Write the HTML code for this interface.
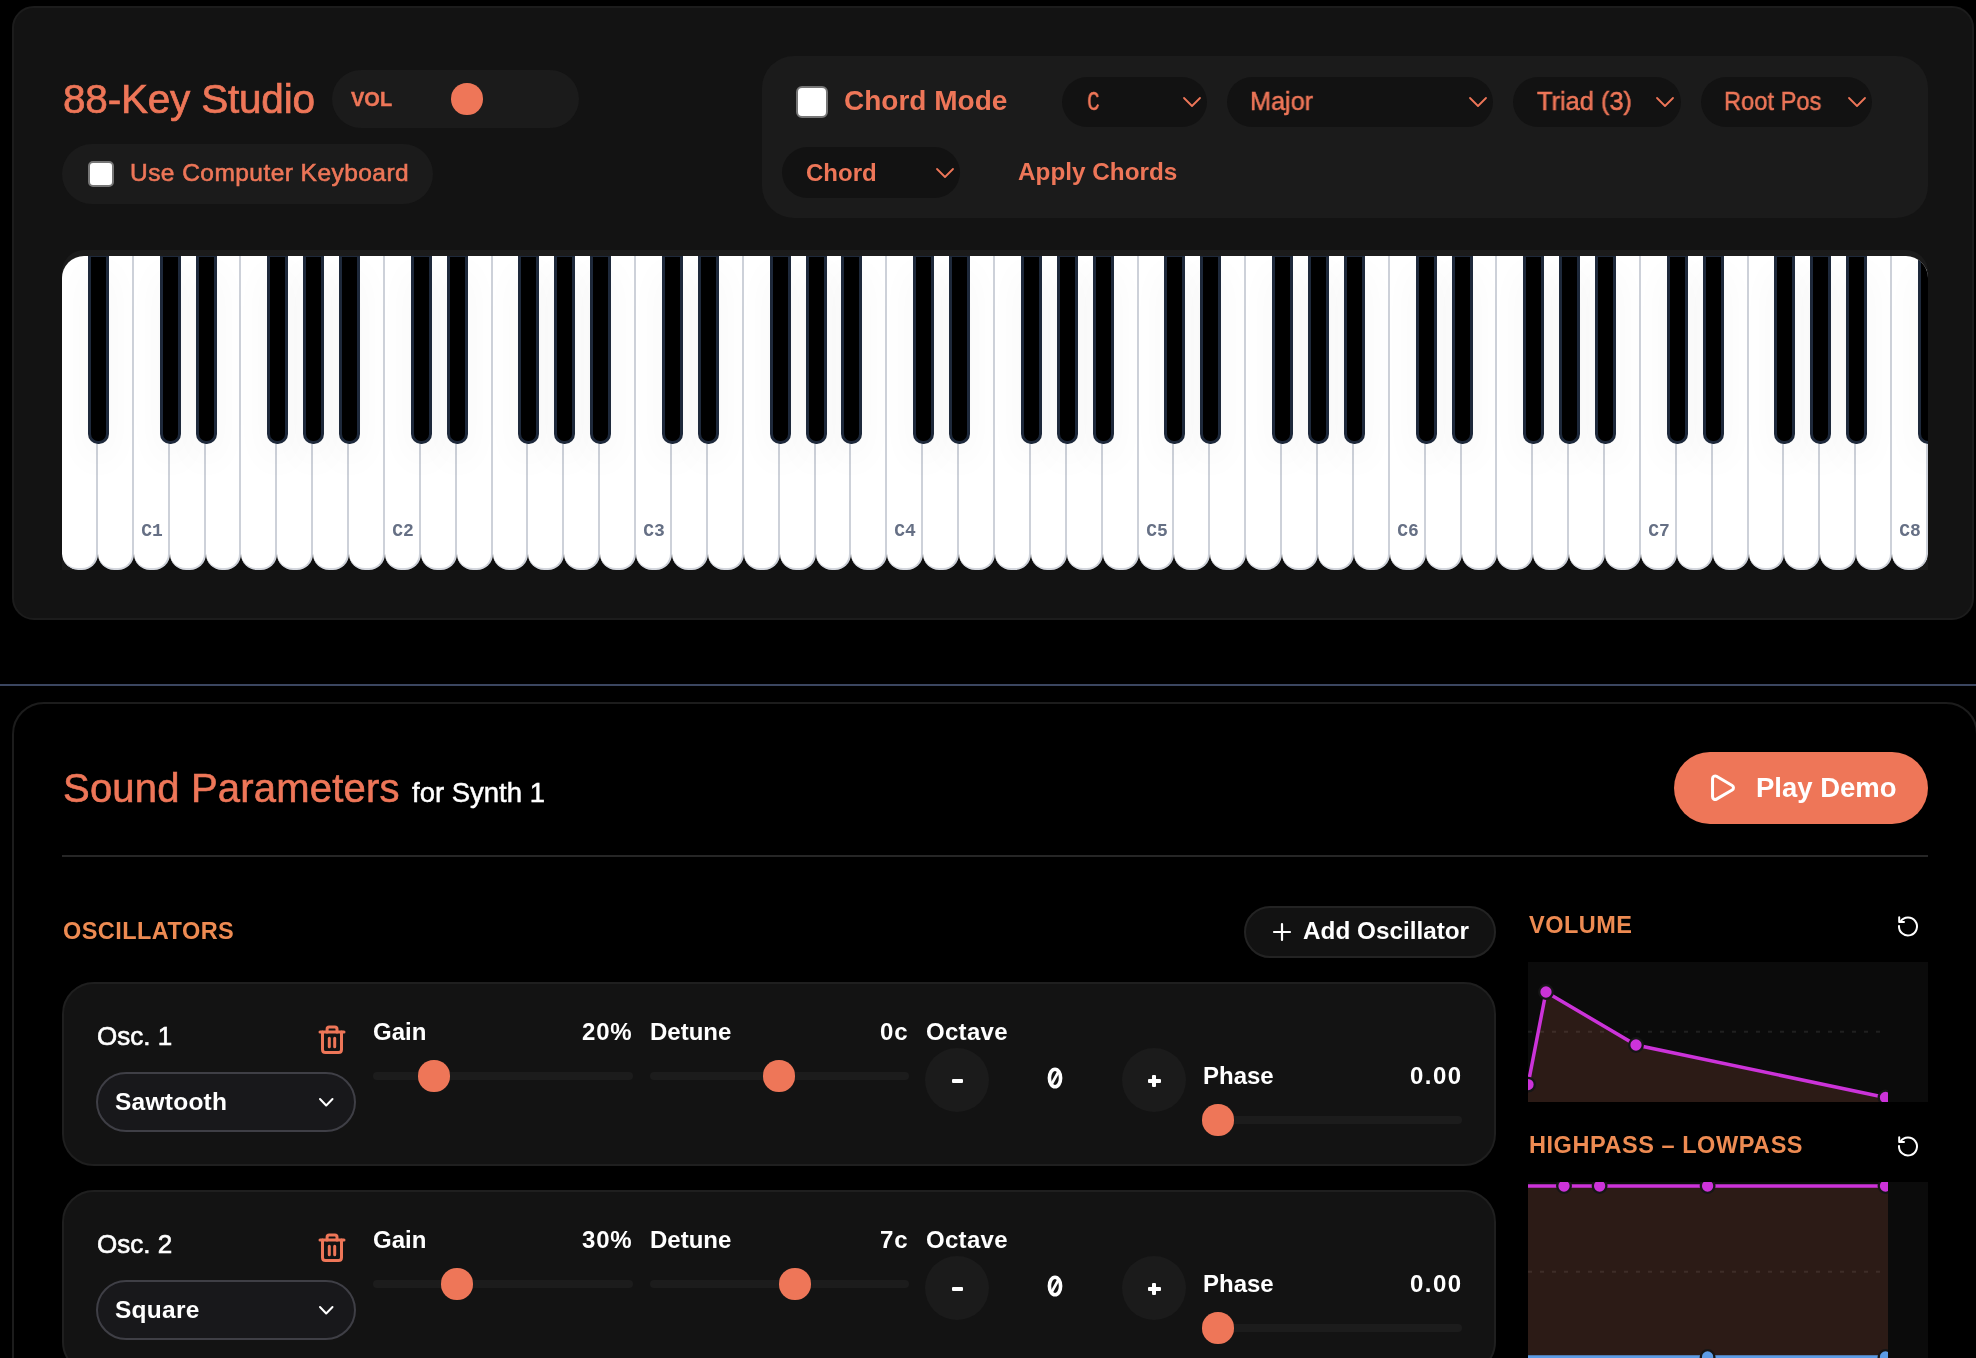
<!DOCTYPE html>
<html><head><meta charset="utf-8"><title>88-Key Studio</title><style>
html,body{margin:0;padding:0;background:#000;width:1976px;height:1358px;overflow:hidden;}
body{position:relative;font-family:"Liberation Sans", sans-serif;}
.t{position:absolute;white-space:nowrap;will-change:transform;}
.b{position:absolute;}
.wk{position:absolute;top:0;height:314px;box-sizing:border-box;background:#fff;border-right:2px solid #cdd1d9;border-bottom:2px solid #d4d7de;border-radius:0 0 16px 16px;}
.bk{position:absolute;top:-2px;width:21px;height:190px;box-sizing:border-box;background:#000;border:3px solid #1e293b;border-radius:0 0 10px 10px;box-shadow:0 18px 36px rgba(0,0,0,0.045);}
.lbl{position:absolute;top:264px;height:22px;text-align:center;font:700 18px/22px "Liberation Mono", monospace;color:#667085;will-change:transform;}
</style></head>
<body>
<div class="b" style="left:12.0px;top:6.0px;width:1962.0px;height:614.0px;background:#131313;border-radius:22px;border:2px solid #1c1c1c;box-sizing:border-box;"></div>
<div class="t" style="left:63.0px;top:78.7px;font-size:40.5px;line-height:40.5px;color:#ee7658;font-weight:400;font-family:'Liberation Sans', sans-serif;letter-spacing:-0.2px;-webkit-text-stroke:0.7px currentColor;">88-Key Studio</div>
<div class="b" style="left:332.0px;top:70.0px;width:247.0px;height:58.0px;background:#1b1b1b;border-radius:29px;"></div>
<div class="t" style="left:350.5px;top:89.1px;font-size:20px;line-height:20px;color:#ee7658;font-weight:700;font-family:'Liberation Sans', sans-serif;letter-spacing:0px;-webkit-text-stroke:0.4px currentColor;">VOL</div>
<div class="b" style="left:451.2px;top:83.2px;width:31.5px;height:31.5px;background:#ee7658;border-radius:15.75px;"></div>
<div class="b" style="left:62.0px;top:144.0px;width:371.0px;height:60.0px;background:#1b1b1b;border-radius:30px;"></div>
<div class="b" style="left:88.0px;top:161.0px;width:26.0px;height:26.0px;background:#ffffff;border-radius:5px;border:2px solid #767676;box-sizing:border-box;"></div>
<div class="t" style="left:130.0px;top:161.3px;font-size:24.5px;line-height:24.5px;color:#ee7658;font-weight:400;font-family:'Liberation Sans', sans-serif;letter-spacing:0.45px;-webkit-text-stroke:0.6px currentColor;">Use Computer Keyboard</div>
<div class="b" style="left:762.0px;top:56.0px;width:1166.0px;height:162.0px;background:#1b1b1b;border-radius:32px;"></div>
<div class="b" style="left:796.0px;top:86.0px;width:32.0px;height:32.0px;background:#ffffff;border-radius:6px;border:2px solid #767676;box-sizing:border-box;"></div>
<div class="t" style="left:844.0px;top:87.3px;font-size:28px;line-height:28px;color:#ee7658;font-weight:700;font-family:'Liberation Sans', sans-serif;letter-spacing:0px;">Chord Mode</div>
<div class="b" style="left:1062.0px;top:76.5px;width:145.0px;height:50.0px;background:#121212;border-radius:25px;"></div>
<div class="t" style="left:1087.0px;top:89.0px;font-size:28px;line-height:28px;color:#ee7658;font-weight:400;font-family:'Liberation Mono', monospace;letter-spacing:0px;display:inline-block;transform:scaleX(0.76);transform-origin:left;-webkit-text-stroke:0.4px currentColor;">C</div>
<svg class="b" style="left:1182.0px;top:95.5px" width="20.0" height="12.0"><polyline points="2,2 10.0,10.0 18.0,2" fill="none" stroke="#ee7658" stroke-width="1.8" stroke-linecap="round" stroke-linejoin="round"/></svg>
<div class="b" style="left:1227.0px;top:76.5px;width:266.0px;height:50.0px;background:#121212;border-radius:25px;"></div>
<div class="t" style="left:1250.0px;top:88.2px;font-size:26px;line-height:26px;color:#ee7658;font-weight:400;font-family:'Liberation Sans', sans-serif;letter-spacing:0px;-webkit-text-stroke:0.5px currentColor;transform:scaleX(0.97);transform-origin:left;">Major</div>
<svg class="b" style="left:1468.0px;top:95.5px" width="20.0" height="12.0"><polyline points="2,2 10.0,10.0 18.0,2" fill="none" stroke="#ee7658" stroke-width="1.8" stroke-linecap="round" stroke-linejoin="round"/></svg>
<div class="b" style="left:1513.0px;top:76.5px;width:168.0px;height:50.0px;background:#121212;border-radius:25px;"></div>
<div class="t" style="left:1537.0px;top:88.2px;font-size:26px;line-height:26px;color:#ee7658;font-weight:400;font-family:'Liberation Sans', sans-serif;letter-spacing:0px;-webkit-text-stroke:0.5px currentColor;transform:scaleX(0.976);transform-origin:left;">Triad (3)</div>
<svg class="b" style="left:1655.0px;top:95.5px" width="20.0" height="12.0"><polyline points="2,2 10.0,10.0 18.0,2" fill="none" stroke="#ee7658" stroke-width="1.8" stroke-linecap="round" stroke-linejoin="round"/></svg>
<div class="b" style="left:1701.0px;top:76.5px;width:171.0px;height:50.0px;background:#121212;border-radius:25px;"></div>
<div class="t" style="left:1724.0px;top:88.2px;font-size:26px;line-height:26px;color:#ee7658;font-weight:400;font-family:'Liberation Sans', sans-serif;letter-spacing:0px;-webkit-text-stroke:0.5px currentColor;transform:scaleX(0.91);transform-origin:left;">Root Pos</div>
<svg class="b" style="left:1847.0px;top:95.5px" width="20.0" height="12.0"><polyline points="2,2 10.0,10.0 18.0,2" fill="none" stroke="#ee7658" stroke-width="1.8" stroke-linecap="round" stroke-linejoin="round"/></svg>
<div class="b" style="left:782.0px;top:147.0px;width:178.0px;height:51.0px;background:#121212;border-radius:26px;"></div>
<div class="t" style="left:806.0px;top:160.7px;font-size:24px;line-height:24px;color:#ee7658;font-weight:700;font-family:'Liberation Sans', sans-serif;letter-spacing:0px;">Chord</div>
<svg class="b" style="left:935.0px;top:166.5px" width="20.0" height="12.0"><polyline points="2,2 10.0,10.0 18.0,2" fill="none" stroke="#ee7658" stroke-width="1.8" stroke-linecap="round" stroke-linejoin="round"/></svg>
<div class="t" style="left:1018.0px;top:160.4px;font-size:24.3px;line-height:24.3px;color:#ee7658;font-weight:700;font-family:'Liberation Sans', sans-serif;letter-spacing:0px;">Apply Chords</div>
<div class="b" style="left:62px;top:250px;width:1866px;height:320px;background:#1b1b1b;border-radius:22px 22px 0 0;"></div>
<div class="b" style="left:62px;top:256px;width:1866px;height:314px;overflow:hidden;border-radius:22px 22px 16px 16px;background:#0e0e0e;">
<div class="wk" style="left:0px;width:36px"></div>
<div class="wk" style="left:36px;width:36px"></div>
<div class="wk" style="left:72px;width:36px"></div>
<div class="wk" style="left:108px;width:36px"></div>
<div class="wk" style="left:144px;width:35px"></div>
<div class="wk" style="left:179px;width:36px"></div>
<div class="wk" style="left:215px;width:36px"></div>
<div class="wk" style="left:251px;width:36px"></div>
<div class="wk" style="left:287px;width:36px"></div>
<div class="wk" style="left:323px;width:36px"></div>
<div class="wk" style="left:359px;width:36px"></div>
<div class="wk" style="left:395px;width:36px"></div>
<div class="wk" style="left:431px;width:35px"></div>
<div class="wk" style="left:466px;width:36px"></div>
<div class="wk" style="left:502px;width:36px"></div>
<div class="wk" style="left:538px;width:36px"></div>
<div class="wk" style="left:574px;width:36px"></div>
<div class="wk" style="left:610px;width:36px"></div>
<div class="wk" style="left:646px;width:36px"></div>
<div class="wk" style="left:682px;width:36px"></div>
<div class="wk" style="left:718px;width:36px"></div>
<div class="wk" style="left:754px;width:35px"></div>
<div class="wk" style="left:789px;width:36px"></div>
<div class="wk" style="left:825px;width:36px"></div>
<div class="wk" style="left:861px;width:36px"></div>
<div class="wk" style="left:897px;width:36px"></div>
<div class="wk" style="left:933px;width:36px"></div>
<div class="wk" style="left:969px;width:36px"></div>
<div class="wk" style="left:1005px;width:36px"></div>
<div class="wk" style="left:1041px;width:36px"></div>
<div class="wk" style="left:1077px;width:35px"></div>
<div class="wk" style="left:1112px;width:36px"></div>
<div class="wk" style="left:1148px;width:36px"></div>
<div class="wk" style="left:1184px;width:36px"></div>
<div class="wk" style="left:1220px;width:36px"></div>
<div class="wk" style="left:1256px;width:36px"></div>
<div class="wk" style="left:1292px;width:36px"></div>
<div class="wk" style="left:1328px;width:36px"></div>
<div class="wk" style="left:1364px;width:36px"></div>
<div class="wk" style="left:1400px;width:35px"></div>
<div class="wk" style="left:1435px;width:36px"></div>
<div class="wk" style="left:1471px;width:36px"></div>
<div class="wk" style="left:1507px;width:36px"></div>
<div class="wk" style="left:1543px;width:36px"></div>
<div class="wk" style="left:1579px;width:36px"></div>
<div class="wk" style="left:1615px;width:36px"></div>
<div class="wk" style="left:1651px;width:36px"></div>
<div class="wk" style="left:1687px;width:35px"></div>
<div class="wk" style="left:1722px;width:36px"></div>
<div class="wk" style="left:1758px;width:36px"></div>
<div class="wk" style="left:1794px;width:36px"></div>
<div class="wk" style="left:1830px;width:36px"></div>
<div class="lbl" style="left:71.77px;width:35.88px">C1</div>
<div class="lbl" style="left:322.96px;width:35.88px">C2</div>
<div class="lbl" style="left:574.15px;width:35.88px">C3</div>
<div class="lbl" style="left:825.35px;width:35.88px">C4</div>
<div class="lbl" style="left:1076.54px;width:35.88px">C5</div>
<div class="lbl" style="left:1327.73px;width:35.88px">C6</div>
<div class="lbl" style="left:1578.92px;width:35.88px">C7</div>
<div class="lbl" style="left:1830.12px;width:35.88px">C8</div>
<div class="bk" style="left:26px"></div>
<div class="bk" style="left:98px"></div>
<div class="bk" style="left:134px"></div>
<div class="bk" style="left:205px"></div>
<div class="bk" style="left:241px"></div>
<div class="bk" style="left:277px"></div>
<div class="bk" style="left:349px"></div>
<div class="bk" style="left:385px"></div>
<div class="bk" style="left:456px"></div>
<div class="bk" style="left:492px"></div>
<div class="bk" style="left:528px"></div>
<div class="bk" style="left:600px"></div>
<div class="bk" style="left:636px"></div>
<div class="bk" style="left:708px"></div>
<div class="bk" style="left:744px"></div>
<div class="bk" style="left:779px"></div>
<div class="bk" style="left:851px"></div>
<div class="bk" style="left:887px"></div>
<div class="bk" style="left:959px"></div>
<div class="bk" style="left:995px"></div>
<div class="bk" style="left:1031px"></div>
<div class="bk" style="left:1102px"></div>
<div class="bk" style="left:1138px"></div>
<div class="bk" style="left:1210px"></div>
<div class="bk" style="left:1246px"></div>
<div class="bk" style="left:1282px"></div>
<div class="bk" style="left:1354px"></div>
<div class="bk" style="left:1390px"></div>
<div class="bk" style="left:1461px"></div>
<div class="bk" style="left:1497px"></div>
<div class="bk" style="left:1533px"></div>
<div class="bk" style="left:1605px"></div>
<div class="bk" style="left:1641px"></div>
<div class="bk" style="left:1712px"></div>
<div class="bk" style="left:1748px"></div>
<div class="bk" style="left:1784px"></div>
<div class="bk" style="left:1856px"></div>
</div>
<div class="b" style="left:0.0px;top:684.0px;width:1976.0px;height:2.0px;background:#3b4660;border-radius:0px;"></div>
<div class="b" style="left:12.0px;top:702.0px;width:1966.0px;height:718.0px;background:#000000;border-radius:32px;border:2px solid #1c1c1c;box-sizing:border-box;"></div>
<div class="t" style="left:63.0px;top:768.1px;font-size:40px;line-height:40px;color:#ee7658;font-weight:400;font-family:'Liberation Sans', sans-serif;letter-spacing:0.2px;-webkit-text-stroke:0.6px currentColor;">Sound Parameters</div>
<div class="t" style="left:412.0px;top:778.7px;font-size:27.5px;line-height:27.5px;color:#ffffff;font-weight:400;font-family:'Liberation Sans', sans-serif;letter-spacing:0px;-webkit-text-stroke:0.5px currentColor;">for Synth 1</div>
<div class="b" style="left:1674.0px;top:752.0px;width:254.0px;height:72.0px;background:#ee7658;border-radius:36px;"></div>
<svg class="b" style="left:1705.8px;top:771.7px" width="31.4" height="31.4" viewBox="0 0 24 24"><path d="M5 5a2 2 0 0 1 3.008-1.728l11.997 6.998a2 2 0 0 1 .003 3.458l-12 7A2 2 0 0 1 5 19z" fill="none" stroke="#fff" stroke-width="2.3" stroke-linejoin="round"/></svg>
<div class="t" style="left:1756.0px;top:773.7px;font-size:27.5px;line-height:27.5px;color:#ffffff;font-weight:700;font-family:'Liberation Sans', sans-serif;letter-spacing:0px;">Play Demo</div>
<div class="b" style="left:62.0px;top:855.0px;width:1866.0px;height:2.0px;background:#262626;border-radius:0px;"></div>
<div class="t" style="left:63.0px;top:920.1px;font-size:23.5px;line-height:23.5px;color:#ee8b52;font-weight:700;font-family:'Liberation Sans', sans-serif;letter-spacing:0.45px;">OSCILLATORS</div>
<div class="b" style="left:1244.0px;top:906.0px;width:252.0px;height:52.0px;background:#121212;border-radius:26px;border:2px solid #232323;box-sizing:border-box;"></div>
<svg class="b" style="left:1272px;top:922px" width="20" height="20"><path d="M10 2 V18 M2 10 H18" stroke="#fff" stroke-width="2.2" stroke-linecap="round"/></svg>
<div class="t" style="left:1303.0px;top:919.4px;font-size:24.3px;line-height:24.3px;color:#ffffff;font-weight:700;font-family:'Liberation Sans', sans-serif;letter-spacing:0px;">Add Oscillator</div>
<div class="b" style="left:62.0px;top:982.0px;width:1434.0px;height:184.0px;background:#131313;border-radius:32px;border:2px solid #1f1f1f;box-sizing:border-box;"></div>
<div class="t" style="left:97.0px;top:1022.5px;font-size:26px;line-height:26px;color:#ffffff;font-weight:400;font-family:'Liberation Sans', sans-serif;letter-spacing:0px;-webkit-text-stroke:0.6px currentColor;">Osc. 1</div>
<svg class="b" style="left:316px;top:1023px" width="32" height="34" viewBox="0 0 32 34"><g fill="none" stroke="#ee7658" stroke-width="3" stroke-linecap="round" stroke-linejoin="round"><path d="M4 9 H28"/><path d="M11.1 9 V6 Q11.1 3.9 13.2 3.9 H18.9 Q21 3.9 21 6 V9"/><path d="M6.5 9 V26.5 Q6.5 29.5 9.5 29.5 H22.5 Q25.5 29.5 25.5 26.5 V9"/><path d="M13.3 15.2 V23.8 M18.7 15.2 V23.8"/></g></svg>
<div class="b" style="left:96.0px;top:1072.0px;width:260.0px;height:59.5px;background:#18181b;border-radius:30px;border:2px solid #3f3f46;box-sizing:border-box;"></div>
<div class="t" style="left:114.5px;top:1090.3px;font-size:24.5px;line-height:24.5px;color:#ffffff;font-weight:700;font-family:'Liberation Sans', sans-serif;letter-spacing:0.25px;">Sawtooth</div>
<svg class="b" style="left:318.0px;top:1097.0px" width="16.5" height="10.5"><polyline points="2,2 8.2,8.5 14.5,2" fill="none" stroke="#ffffff" stroke-width="2" stroke-linecap="round" stroke-linejoin="round"/></svg>
<div class="t" style="left:372.5px;top:1020.2px;font-size:24px;line-height:24px;color:#ffffff;font-weight:700;font-family:'Liberation Sans', sans-serif;letter-spacing:0px;">Gain</div>
<div class="t" style="right:1343.2px;top:1020.2px;font-size:24px;line-height:24px;color:#ffffff;font-weight:700;font-family:'Liberation Sans', sans-serif;letter-spacing:0.8px;">20%</div>
<div class="b" style="left:372.5px;top:1072.0px;width:260.5px;height:8.0px;background:#1c1c1c;border-radius:4px;"></div>
<div class="b" style="left:418.4px;top:1060.4px;width:31.2px;height:31.2px;background:#ee7658;border-radius:15.6px;"></div>
<div class="t" style="left:650.0px;top:1020.2px;font-size:24px;line-height:24px;color:#ffffff;font-weight:700;font-family:'Liberation Sans', sans-serif;letter-spacing:0px;">Detune</div>
<div class="t" style="right:1067.0px;top:1020.2px;font-size:24px;line-height:24px;color:#ffffff;font-weight:700;font-family:'Liberation Sans', sans-serif;letter-spacing:1.0px;">0c</div>
<div class="b" style="left:650.0px;top:1072.0px;width:259.0px;height:8.0px;background:#1c1c1c;border-radius:4px;"></div>
<div class="b" style="left:763.4px;top:1060.4px;width:31.2px;height:31.2px;background:#ee7658;border-radius:15.6px;"></div>
<div class="t" style="left:925.5px;top:1020.2px;font-size:24px;line-height:24px;color:#ffffff;font-weight:700;font-family:'Liberation Sans', sans-serif;letter-spacing:0.3px;">Octave</div>
<div class="b" style="left:925.0px;top:1048.0px;width:64.0px;height:64.0px;background:#1b1b1b;border-radius:32.0px;"></div>
<div class="b" style="left:951.5px;top:1078.5px;width:11.5px;height:4.0px;background:#ffffff;border-radius:1px;"></div>
<svg class="b" style="left:1045px;top:1065px" width="20" height="26" viewBox="0 0 20 26"><ellipse cx="10" cy="13" rx="5.6" ry="8.8" fill="none" stroke="#fff" stroke-width="3.6"/><path d="M13.6 6.5 L6.4 19.5" stroke="#fff" stroke-width="2.6" stroke-linecap="round"/></svg>
<div class="b" style="left:1122.0px;top:1048.0px;width:64.0px;height:64.0px;background:#1b1b1b;border-radius:32.0px;"></div>
<div class="b" style="left:1147.5px;top:1079.0px;width:13.0px;height:3.5px;background:#ffffff;border-radius:1px;"></div>
<div class="b" style="left:1152.2px;top:1074.5px;width:3.6px;height:12.5px;background:#ffffff;border-radius:1px;"></div>
<div class="t" style="left:1202.5px;top:1064.0px;font-size:24px;line-height:24px;color:#ffffff;font-weight:700;font-family:'Liberation Sans', sans-serif;letter-spacing:0px;">Phase</div>
<div class="t" style="right:513.0px;top:1064.0px;font-size:24px;line-height:24px;color:#ffffff;font-weight:700;font-family:'Liberation Sans', sans-serif;letter-spacing:1.5px;">0.00</div>
<div class="b" style="left:1202.0px;top:1116.0px;width:260.0px;height:8.0px;background:#1c1c1c;border-radius:4px;"></div>
<div class="b" style="left:1202.4px;top:1104.4px;width:31.2px;height:31.2px;background:#ee7658;border-radius:15.6px;"></div>
<div class="b" style="left:62.0px;top:1190.0px;width:1434.0px;height:184.0px;background:#131313;border-radius:32px;border:2px solid #1f1f1f;box-sizing:border-box;"></div>
<div class="t" style="left:97.0px;top:1230.5px;font-size:26px;line-height:26px;color:#ffffff;font-weight:400;font-family:'Liberation Sans', sans-serif;letter-spacing:0px;-webkit-text-stroke:0.6px currentColor;">Osc. 2</div>
<svg class="b" style="left:316px;top:1231px" width="32" height="34" viewBox="0 0 32 34"><g fill="none" stroke="#ee7658" stroke-width="3" stroke-linecap="round" stroke-linejoin="round"><path d="M4 9 H28"/><path d="M11.1 9 V6 Q11.1 3.9 13.2 3.9 H18.9 Q21 3.9 21 6 V9"/><path d="M6.5 9 V26.5 Q6.5 29.5 9.5 29.5 H22.5 Q25.5 29.5 25.5 26.5 V9"/><path d="M13.3 15.2 V23.8 M18.7 15.2 V23.8"/></g></svg>
<div class="b" style="left:96.0px;top:1280.0px;width:260.0px;height:59.5px;background:#18181b;border-radius:30px;border:2px solid #3f3f46;box-sizing:border-box;"></div>
<div class="t" style="left:114.5px;top:1298.3px;font-size:24.5px;line-height:24.5px;color:#ffffff;font-weight:700;font-family:'Liberation Sans', sans-serif;letter-spacing:0.25px;">Square</div>
<svg class="b" style="left:318.0px;top:1305.0px" width="16.5" height="10.5"><polyline points="2,2 8.2,8.5 14.5,2" fill="none" stroke="#ffffff" stroke-width="2" stroke-linecap="round" stroke-linejoin="round"/></svg>
<div class="t" style="left:372.5px;top:1228.2px;font-size:24px;line-height:24px;color:#ffffff;font-weight:700;font-family:'Liberation Sans', sans-serif;letter-spacing:0px;">Gain</div>
<div class="t" style="right:1343.2px;top:1228.2px;font-size:24px;line-height:24px;color:#ffffff;font-weight:700;font-family:'Liberation Sans', sans-serif;letter-spacing:0.8px;">30%</div>
<div class="b" style="left:372.5px;top:1280.0px;width:260.5px;height:8.0px;background:#1c1c1c;border-radius:4px;"></div>
<div class="b" style="left:441.4px;top:1268.4px;width:31.2px;height:31.2px;background:#ee7658;border-radius:15.6px;"></div>
<div class="t" style="left:650.0px;top:1228.2px;font-size:24px;line-height:24px;color:#ffffff;font-weight:700;font-family:'Liberation Sans', sans-serif;letter-spacing:0px;">Detune</div>
<div class="t" style="right:1067.0px;top:1228.2px;font-size:24px;line-height:24px;color:#ffffff;font-weight:700;font-family:'Liberation Sans', sans-serif;letter-spacing:1.0px;">7c</div>
<div class="b" style="left:650.0px;top:1280.0px;width:259.0px;height:8.0px;background:#1c1c1c;border-radius:4px;"></div>
<div class="b" style="left:779.4px;top:1268.4px;width:31.2px;height:31.2px;background:#ee7658;border-radius:15.6px;"></div>
<div class="t" style="left:925.5px;top:1228.2px;font-size:24px;line-height:24px;color:#ffffff;font-weight:700;font-family:'Liberation Sans', sans-serif;letter-spacing:0.3px;">Octave</div>
<div class="b" style="left:925.0px;top:1256.0px;width:64.0px;height:64.0px;background:#1b1b1b;border-radius:32.0px;"></div>
<div class="b" style="left:951.5px;top:1286.5px;width:11.5px;height:4.0px;background:#ffffff;border-radius:1px;"></div>
<svg class="b" style="left:1045px;top:1273px" width="20" height="26" viewBox="0 0 20 26"><ellipse cx="10" cy="13" rx="5.6" ry="8.8" fill="none" stroke="#fff" stroke-width="3.6"/><path d="M13.6 6.5 L6.4 19.5" stroke="#fff" stroke-width="2.6" stroke-linecap="round"/></svg>
<div class="b" style="left:1122.0px;top:1256.0px;width:64.0px;height:64.0px;background:#1b1b1b;border-radius:32.0px;"></div>
<div class="b" style="left:1147.5px;top:1287.0px;width:13.0px;height:3.5px;background:#ffffff;border-radius:1px;"></div>
<div class="b" style="left:1152.2px;top:1282.5px;width:3.6px;height:12.5px;background:#ffffff;border-radius:1px;"></div>
<div class="t" style="left:1202.5px;top:1272.0px;font-size:24px;line-height:24px;color:#ffffff;font-weight:700;font-family:'Liberation Sans', sans-serif;letter-spacing:0px;">Phase</div>
<div class="t" style="right:513.0px;top:1272.0px;font-size:24px;line-height:24px;color:#ffffff;font-weight:700;font-family:'Liberation Sans', sans-serif;letter-spacing:1.5px;">0.00</div>
<div class="b" style="left:1202.0px;top:1324.0px;width:260.0px;height:8.0px;background:#1c1c1c;border-radius:4px;"></div>
<div class="b" style="left:1202.4px;top:1312.4px;width:31.2px;height:31.2px;background:#ee7658;border-radius:15.6px;"></div>
<div class="t" style="left:1529.0px;top:913.7px;font-size:23.5px;line-height:23.5px;color:#ee8b52;font-weight:700;font-family:'Liberation Sans', sans-serif;letter-spacing:0.5px;">VOLUME</div>
<svg class="b" style="left:1896px;top:914px" width="24" height="24" viewBox="0 0 24 24"><g fill="none" stroke="#fff" stroke-width="2" stroke-linecap="round" stroke-linejoin="round"><path d="M4.5 7.5 A9 9 0 1 1 3 12"/><path d="M3.2 3.2 V8 H8"/></g></svg>
<div class="b" style="left:1528.0px;top:962.0px;width:400.0px;height:140.0px;background:#0b0b0b;border-radius:0px;"></div>
<svg class="b" style="left:1528px;top:962px" width="360" height="140" viewBox="0 0 360 140"><line x1="0" y1="69.7" x2="352" y2="69.7" stroke="#202020" stroke-width="2" stroke-dasharray="4 8"/><polygon points="0,140 0,122.6 18,30 108,83 357.5,135.5 357.5,140" fill="rgba(238,118,88,0.15)"/><polyline points="0,122.6 18,30 108,83 357.5,135.5" fill="none" stroke="#cc33d9" stroke-width="3.5"/><circle cx="0" cy="122.6" r="6.8" fill="#cc33d9" stroke="#161616" stroke-width="2.3"/><circle cx="18" cy="30" r="6.8" fill="#cc33d9" stroke="#161616" stroke-width="2.3"/><circle cx="108" cy="83" r="6.8" fill="#cc33d9" stroke="#161616" stroke-width="2.3"/><circle cx="357.5" cy="135.5" r="6.8" fill="#cc33d9" stroke="#161616" stroke-width="2.3"/></svg>
<div class="t" style="left:1529.0px;top:1134.3px;font-size:23.5px;line-height:23.5px;color:#ee8b52;font-weight:700;font-family:'Liberation Sans', sans-serif;letter-spacing:0.55px;">HIGHPASS &#8211; LOWPASS</div>
<svg class="b" style="left:1896px;top:1134px" width="24" height="24" viewBox="0 0 24 24"><g fill="none" stroke="#fff" stroke-width="2" stroke-linecap="round" stroke-linejoin="round"><path d="M4.5 7.5 A9 9 0 1 1 3 12"/><path d="M3.2 3.2 V8 H8"/></g></svg>
<div class="b" style="left:1528.0px;top:1182.0px;width:400.0px;height:218.0px;background:#0b0b0b;border-radius:0px;"></div>
<svg class="b" style="left:1528px;top:1182px" width="360" height="176" viewBox="0 0 360 176"><line x1="0" y1="89.7" x2="352" y2="89.7" stroke="#202020" stroke-width="2" stroke-dasharray="4 8"/><rect x="0" y="4" width="360" height="172" fill="rgba(238,118,88,0.15)"/><line x1="0" y1="4" x2="360" y2="4" stroke="#cc33d9" stroke-width="3.5"/><circle cx="36" cy="4" r="6.8" fill="#cc33d9" stroke="#161616" stroke-width="2.3"/><circle cx="71.6" cy="4" r="6.8" fill="#cc33d9" stroke="#161616" stroke-width="2.3"/><circle cx="179.6" cy="4" r="6.8" fill="#cc33d9" stroke="#161616" stroke-width="2.3"/><circle cx="357.5" cy="4" r="6.8" fill="#cc33d9" stroke="#161616" stroke-width="2.3"/><line x1="0" y1="175" x2="360" y2="175" stroke="#5c9ce6" stroke-width="3.5"/><circle cx="179.6" cy="175" r="6.8" fill="#5c9ce6" stroke="#161616" stroke-width="2.3"/><circle cx="357.5" cy="175" r="6.8" fill="#5c9ce6" stroke="#161616" stroke-width="2.3"/></svg>
</body></html>
